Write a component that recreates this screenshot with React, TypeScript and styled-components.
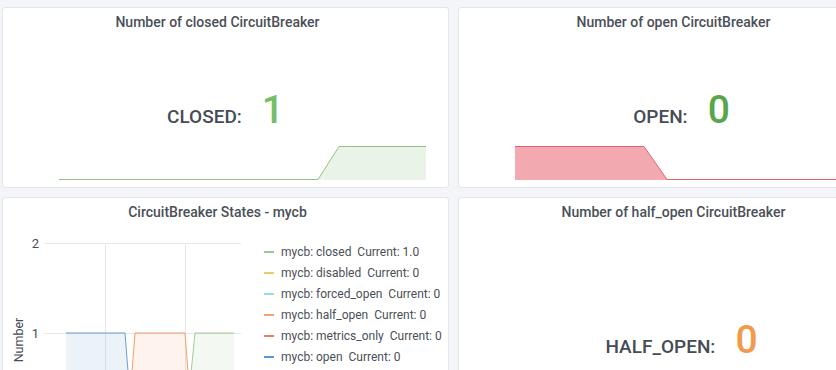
import React from 'react'
import styled, { createGlobalStyle } from 'styled-components'

const GlobalStyle = createGlobalStyle`
    html, body {
        margin: 0;
        padding: 0;
        background: #f4f5f8;
        overflow: hidden;
    }
    body {
        font-family: Roboto, 'Liberation Sans', sans-serif;
        color: #464c54;
    }
`

const Dashboard = styled.div`
    display: grid;
    grid-template-columns: 447px 447px;
    grid-template-rows: 181px 260px;
    gap: 9px;
    padding: 7px 0 0 2px;
    width: 920px;
`

const Panel = styled.div`
    position: relative;
    display: flex;
    flex-direction: column;
    background: #ffffff;
    border: 1px solid #e3e6ea;
    border-radius: 3px;
    box-sizing: border-box;
    overflow: hidden;
`

const PanelTitle = styled.div`
    height: 29px;
    line-height: 29px;
    padding-right: 16px;
    text-align: center;
    font-size: 14px;
    font-weight: 500;
    color: #4a5058;
    white-space: nowrap;
`

const StatBody = styled.div`
    flex: 1;
    display: flex;
    align-items: center;
    justify-content: center;
    padding-bottom: 4px;
`

const StatRow = styled.div`
    display: flex;
    align-items: baseline;
    gap: 20px;
    position: relative;
    z-index: 1;
`

const StatLabel = styled.span`
    font-size: 19px;
    font-weight: 500;
    color: #464c54;
`

const StatValue = styled.span<{ $color: string }>`
    font-size: 39px;
    font-weight: 500;
    color: ${(p) => p.$color};
`

const Sparkline = styled.svg`
    position: absolute;
    left: 56px;
    bottom: 7px;
    width: 367px;
    height: 34px;
    overflow: visible;
`

const GraphBody = styled.div`
    flex: 1;
    display: flex;
    align-items: flex-start;
`

const Plot = styled.svg`
    flex: 0 0 246px;
    height: 230px;
`

const Legend = styled.ul`
    list-style: none;
    margin: 0;
    padding: 14px 0 0 15px;
    display: flex;
    flex-direction: column;
`

const LegendItem = styled.li`
    display: flex;
    align-items: center;
    height: 21px;
    font-size: 12px;
    color: #4a5058;
    white-space: pre;
`

const LegendSwatch = styled.span<{ $color: string }>`
    width: 10px;
    height: 2px;
    margin-right: 7px;
    background: ${(p) => p.$color};
    opacity: 0.75;
`

type StatProps = {
    title: string
    label: string
    value: string
    color: string
    spark?: 'up' | 'down'
}

function StatPanel(props: StatProps) {
    return (
        <Panel>
            <PanelTitle>{props.title}</PanelTitle>
            <StatBody>
                <StatRow>
                    <StatLabel>{props.label}</StatLabel>
                    <StatValue $color={props.color}>{props.value}</StatValue>
                </StatRow>
            </StatBody>
            {props.spark === 'up' && (
                <Sparkline viewBox="0 0 367 34">
                    <path
                        d="M0 33.5 L259 33.5 L280 0.5 L367 0.5 L367 34 L0 34 Z"
                        fill="rgba(126,178,109,0.16)"
                    />
                    <polyline
                        points="0,33.5 259,33.5 280,0.5 367,0.5"
                        fill="none"
                        stroke="#8fc281"
                        strokeWidth="1"
                    />
                </Sparkline>
            )}
            {props.spark === 'down' && (
                <Sparkline viewBox="0 0 367 34">
                    <path
                        d="M0 0.5 L129 0.5 L152 33.5 L367 33.5 L367 34 L0 34 Z"
                        fill="#f2aab0"
                    />
                    <polyline
                        points="0,0.5 129,0.5 152,33.5 367,33.5"
                        fill="none"
                        stroke="#e3636d"
                        strokeWidth="1"
                    />
                </Sparkline>
            )}
        </Panel>
    )
}

const legend = [
    { name: 'mycb: closed', current: '1.0', color: '#7eb26d' },
    { name: 'mycb: disabled', current: '0', color: '#eab839' },
    { name: 'mycb: forced_open', current: '0', color: '#6ed0e0' },
    { name: 'mycb: half_open', current: '0', color: '#ef843c' },
    { name: 'mycb: metrics_only', current: '0', color: '#e24d42' },
    { name: 'mycb: open', current: '0', color: '#1f78c1' },
]

function StatesPanel() {
    return (
        <Panel>
            <PanelTitle>CircuitBreaker States - mycb</PanelTitle>
            <GraphBody>
                <Plot viewBox="0 0 246 230">
                    {/* grid */}
                    <line x1="41" y1="16.5" x2="238" y2="16.5" stroke="#e6e8eb" />
                    <line x1="41" y1="106.5" x2="238" y2="106.5" stroke="#e6e8eb" />
                    <line x1="102.5" y1="16" x2="102.5" y2="230" stroke="#e6e8eb" />
                    <line x1="182.5" y1="16" x2="182.5" y2="230" stroke="#e6e8eb" />
                    {/* axis */}
                    <text x="36" y="21" fontSize="13" fill="#464c54" textAnchor="end">
                        2
                    </text>
                    <text x="36" y="111" fontSize="13" fill="#464c54" textAnchor="end">
                        1
                    </text>
                    <text
                        x="15.5"
                        y="113"
                        fontSize="12.5"
                        fill="#464c54"
                        textAnchor="middle"
                        dominantBaseline="central"
                        transform="rotate(-90 15.5 113)"
                    >
                        Number
                    </text>
                    {/* open */}
                    <path d="M63 106 L122 106 L129 196 L63 196 Z" fill="rgba(31,120,193,0.09)" />
                    <polyline points="63,106 122,106 129,196" fill="none" stroke="#6a9fd4" strokeWidth="1" />
                    {/* half_open */}
                    <path d="M125 196 L132 106 L182 106 L189 196 Z" fill="rgba(239,132,60,0.09)" />
                    <polyline points="125,196 132,106 182,106 189,196" fill="none" stroke="#efa06c" strokeWidth="1" />
                    {/* closed */}
                    <path d="M183 196 L192 106 L231 106 L231 196 Z" fill="rgba(126,178,109,0.09)" />
                    <polyline points="183,196 192,106 231,106" fill="none" stroke="#a6cc9a" strokeWidth="1" />
                </Plot>
                <Legend>
                    {legend.map((item) => (
                        <LegendItem key={item.name}>
                            <LegendSwatch $color={item.color} />
                            {item.name}  Current: {item.current}
                        </LegendItem>
                    ))}
                </Legend>
            </GraphBody>
        </Panel>
    )
}

export default function App() {
    return (
        <>
            <GlobalStyle />
            <Dashboard>
                <StatPanel
                    title="Number of closed CircuitBreaker"
                    label="CLOSED:"
                    value="1"
                    color="#73bf69"
                    spark="up"
                />
                <StatPanel
                    title="Number of open CircuitBreaker"
                    label="OPEN:"
                    value="0"
                    color="#56a64b"
                    spark="down"
                />
                <StatesPanel />
                <StatPanel
                    title="Number of half_open CircuitBreaker"
                    label="HALF_OPEN:"
                    value="0"
                    color="#f2994a"
                />
            </Dashboard>
        </>
    )
}
